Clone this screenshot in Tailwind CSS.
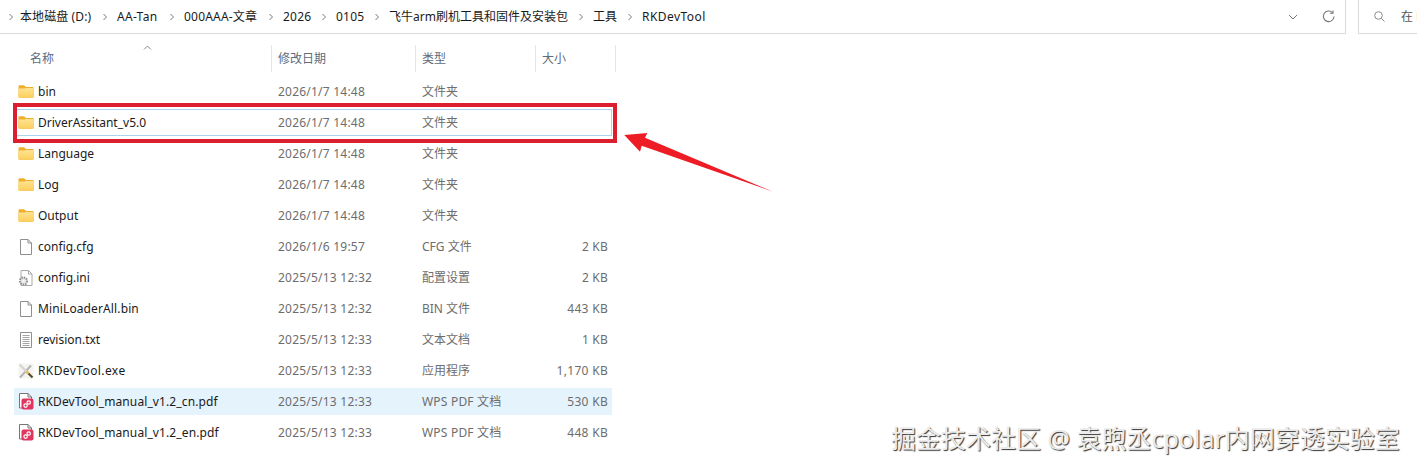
<!DOCTYPE html>
<html lang="zh-CN">
<head>
<meta charset="utf-8">
<title>RKDevTool</title>
<script src="https://cdn.jsdelivr.net/npm/@tailwindcss/browser@4"></script>
</head>
<body class="bg-white overflow-hidden">
<svg class="absolute w-0 h-0" width="0" height="0">
  <defs>
    <linearGradient id="fg" x1="0" y1="0" x2="0" y2="1"><stop offset="0" stop-color="#fee392"/><stop offset="1" stop-color="#fbcf5c"/></linearGradient>
    <symbol id="folder" viewBox="0 0 16 13">
      <path d="M0.5 1.5 Q0.5 0.3 1.7 0.3 H6 L8 2 H14.5 Q15.7 2 15.7 3.2 V11.5 Q15.7 12.7 14.5 12.7 H1.7 Q0.5 12.7 0.5 11.5 Z" fill="#eeb02a"/>
      <path d="M0.5 4.6 Q0.5 3.6 1.5 3.6 H6.5 L8 3 H14.5 Q15.7 3 15.7 4 V11.5 Q15.7 12.7 14.5 12.7 H1.7 Q0.5 12.7 0.5 11.5 Z" fill="url(#fg)"/>
    </symbol>
    <symbol id="file" viewBox="0 0 16 16">
      <path d="M2.5 0.5 H10 L13.5 4 V15.5 H2.5 Z" fill="#fff" stroke="#8f8f8f"/>
      <path d="M10 0.5 V4 H13.5" fill="none" stroke="#8f8f8f"/>
    </symbol>
    <symbol id="pdf" viewBox="0 0 16 17">
      <path d="M1.5 0.5 H10 L13.5 4 V15 H1.5 Z" fill="#fff" stroke="#777"/>
      <path d="M10 0.5 V4 H13.5" fill="none" stroke="#777"/>
      <rect x="3.5" y="5.5" width="12" height="11" rx="2" fill="#e0355f"/>
      <circle cx="10.7" cy="9.5" r="1.7" fill="none" stroke="#fff" stroke-width="1.2"/>
      <circle cx="7.6" cy="12.6" r="1.7" fill="none" stroke="#fff" stroke-width="1.2"/>
    </symbol>
  </defs>
</svg>

<div class="relative w-[1417px] h-[469px] overflow-hidden font-['Noto_Sans','Noto_Sans_CJK_SC',sans-serif] text-[12px]">

  <!-- top bar -->
  <div class="flex h-[34px]">
    <div class="w-[1346px] flex items-center border-b border-r border-[#d9d9d9] text-[#1a1a1a]">
      <div class="w-[20px] flex justify-center pl-[2px]"><svg width="6" height="8" viewBox="0 0 6 8"><path d="M1.5 1 L4.5 4 L1.5 7" fill="none" stroke="#777" stroke-width="1"/></svg></div>
      <span class="w-[72px] whitespace-nowrap tracking-[0.1px]">本地磁盘 (D:)</span>
      <div class="w-[25px] flex justify-center"><svg width="6" height="8" viewBox="0 0 6 8"><path d="M1.5 1 L4.5 4 L1.5 7" fill="none" stroke="#777" stroke-width="1"/></svg></div>
      <span class="w-[42px] whitespace-nowrap tracking-[0.3px]">AA-Tan</span>
      <div class="w-[25px] flex justify-center"><svg width="6" height="8" viewBox="0 0 6 8"><path d="M1.5 1 L4.5 4 L1.5 7" fill="none" stroke="#777" stroke-width="1"/></svg></div>
      <span class="w-[74px] whitespace-nowrap tracking-[0.2px]">000AAA-文章</span>
      <div class="w-[25px] flex justify-center"><svg width="6" height="8" viewBox="0 0 6 8"><path d="M1.5 1 L4.5 4 L1.5 7" fill="none" stroke="#777" stroke-width="1"/></svg></div>
      <span class="w-[28px] whitespace-nowrap tracking-[0.2px]">2026</span>
      <div class="w-[25px] flex justify-center"><svg width="6" height="8" viewBox="0 0 6 8"><path d="M1.5 1 L4.5 4 L1.5 7" fill="none" stroke="#777" stroke-width="1"/></svg></div>
      <span class="w-[28px] whitespace-nowrap tracking-[0.2px]">0105</span>
      <div class="w-[25px] flex justify-center"><svg width="6" height="8" viewBox="0 0 6 8"><path d="M1.5 1 L4.5 4 L1.5 7" fill="none" stroke="#777" stroke-width="1"/></svg></div>
      <span class="w-[179px] whitespace-nowrap">飞牛arm刷机工具和固件及安装包</span>
      <div class="w-[25px] flex justify-center"><svg width="6" height="8" viewBox="0 0 6 8"><path d="M1.5 1 L4.5 4 L1.5 7" fill="none" stroke="#777" stroke-width="1"/></svg></div>
      <span class="w-[24px] whitespace-nowrap">工具</span>
      <div class="w-[25px] flex justify-center"><svg width="6" height="8" viewBox="0 0 6 8"><path d="M1.5 1 L4.5 4 L1.5 7" fill="none" stroke="#777" stroke-width="1"/></svg></div>
      <span class="whitespace-nowrap tracking-[0.45px]">RKDevTool</span>
      <div class="ml-auto flex items-center gap-[24px] pr-[10px]">
        <svg width="10" height="6" viewBox="0 0 10 6"><path d="M1 1 L5 5 L9 1" fill="none" stroke="#777" stroke-width="1"/></svg>
        <svg width="13" height="13" viewBox="0 0 13 13"><path d="M10.5 2.6 A5.3 5.3 0 1 0 12 6.5" fill="none" stroke="#777" stroke-width="1.1"/><path d="M8 3.3 H11 V0.4" fill="none" stroke="#777" stroke-width="1.1"/></svg>
      </div>
    </div>
    <div class="ml-[12px] flex-1 min-w-0 flex items-center border-b border-l border-[#d9d9d9] pl-[15px] overflow-hidden">
      <svg class="shrink-0" width="11" height="11" viewBox="0 0 11 11"><circle cx="4.5" cy="4.5" r="3.8" fill="none" stroke="#8a8a8a"/><path d="M7.3 7.3 L10.5 10.5" stroke="#8a8a8a"/></svg>
      <span class="ml-[16px] whitespace-nowrap text-[#555]">在 RKDevTool 中搜索</span>
    </div>
  </div>

  <!-- header -->
  <div class="relative mt-[11px] flex h-[27px] items-center text-[#5d6b7d]">
    <div class="w-[272px] h-full pl-[30px] flex items-center border-r border-[#e5e5e5]">名称</div>
    <div class="w-[144px] h-full pl-[6px] flex items-center border-r border-[#e5e5e5]">修改日期</div>
    <div class="w-[120px] h-full pl-[6px] flex items-center border-r border-[#e5e5e5]">类型</div>
    <div class="w-[80px] h-full pl-[6px] flex items-center border-r border-[#e5e5e5]">大小</div>
    <svg class="absolute left-[143px] top-0" width="9" height="5" viewBox="0 0 9 5"><path d="M1 4.5 L4.5 1 L8 4.5" fill="none" stroke="#888" stroke-width="1"/></svg>
  </div>

  <!-- rows -->
  <div class="mt-[6px] ml-[14px] w-[598px] flex flex-col gap-[4px] text-[#6d6d6d]">
    <div class="h-[27px] grid grid-cols-[264px_144px_114px_76px] items-center">
      <div class="flex items-center text-[#1a1a1a]"><svg class="ml-[4px] mr-[4px]" width="16" height="13"><use href="#folder"/></svg><span>bin</span></div>
      <div class="tracking-[0.22px]">2026/1/7 14:48</div><div>文件夹</div><div></div>
    </div>
    <div class="h-[27px] grid grid-cols-[264px_144px_114px_76px] items-center outline outline-1 -outline-offset-1 outline-[#a9d3ee]">
      <div class="flex items-center text-[#1a1a1a]"><svg class="ml-[4px] mr-[4px]" width="16" height="13"><use href="#folder"/></svg><span>DriverAssitant_v5.0</span></div>
      <div class="tracking-[0.22px]">2026/1/7 14:48</div><div>文件夹</div><div></div>
    </div>
    <div class="h-[27px] grid grid-cols-[264px_144px_114px_76px] items-center">
      <div class="flex items-center text-[#1a1a1a]"><svg class="ml-[4px] mr-[4px]" width="16" height="13"><use href="#folder"/></svg><span>Language</span></div>
      <div class="tracking-[0.22px]">2026/1/7 14:48</div><div>文件夹</div><div></div>
    </div>
    <div class="h-[27px] grid grid-cols-[264px_144px_114px_76px] items-center">
      <div class="flex items-center text-[#1a1a1a]"><svg class="ml-[4px] mr-[4px]" width="16" height="13"><use href="#folder"/></svg><span>Log</span></div>
      <div class="tracking-[0.22px]">2026/1/7 14:48</div><div>文件夹</div><div></div>
    </div>
    <div class="h-[27px] grid grid-cols-[264px_144px_114px_76px] items-center">
      <div class="flex items-center text-[#1a1a1a]"><svg class="ml-[4px] mr-[4px]" width="16" height="13"><use href="#folder"/></svg><span>Output</span></div>
      <div class="tracking-[0.22px]">2026/1/7 14:48</div><div>文件夹</div><div></div>
    </div>
    <div class="h-[27px] grid grid-cols-[264px_144px_114px_76px] items-center">
      <div class="flex items-center text-[#1a1a1a]"><svg class="ml-[4px] mr-[4px]" width="16" height="16"><use href="#file"/></svg><span>config.cfg</span></div>
      <div class="tracking-[0.22px]">2026/1/6 19:57</div><div>CFG 文件</div><div class="text-right pr-[4px] tracking-[0.2px]">2 KB</div>
    </div>
    <div class="h-[27px] grid grid-cols-[264px_144px_114px_76px] items-center">
      <div class="flex items-center text-[#1a1a1a]">
        <svg class="ml-[4px] mr-[4px] overflow-visible" width="16" height="16" viewBox="0 0 16 16"><path d="M3 0.5 H10.5 L14 4 V15.5 H3 Z" fill="#fff" stroke="#a8a8a8"/><path d="M10.5 0.5 V4 H14" fill="none" stroke="#a8a8a8"/><circle cx="5.5" cy="11" r="3.6" fill="#e6e6e6" stroke="#8c8c8c" stroke-width="2" stroke-dasharray="1.5 0.9"/><circle cx="5.5" cy="11" r="1.2" fill="#f4f4f4"/></svg>
        <span>config.ini</span></div>
      <div class="tracking-[0.22px]">2025/5/13 12:32</div><div>配置设置</div><div class="text-right pr-[4px] tracking-[0.2px]">2 KB</div>
    </div>
    <div class="h-[27px] grid grid-cols-[264px_144px_114px_76px] items-center">
      <div class="flex items-center text-[#1a1a1a]"><svg class="ml-[4px] mr-[4px]" width="16" height="16"><use href="#file"/></svg><span class="tracking-[0.12px]">MiniLoaderAll.bin</span></div>
      <div class="tracking-[0.22px]">2025/5/13 12:32</div><div>BIN 文件</div><div class="text-right pr-[4px] tracking-[0.3px]">443 KB</div>
    </div>
    <div class="h-[27px] grid grid-cols-[264px_144px_114px_76px] items-center">
      <div class="flex items-center text-[#1a1a1a]">
        <svg class="ml-[4px] mr-[4px]" width="16" height="16" viewBox="0 0 16 16"><path d="M2.5 0.5 H13.5 V15.5 H2.5 Z" fill="#fff" stroke="#8f8f8f"/><path d="M4.5 3.5 H11.5 M4.5 5.5 H11.5 M4.5 7.5 H11.5 M4.5 9.5 H11.5 M4.5 11.5 H11.5 M4.5 13.5 H11.5" stroke="#a5a5a5"/></svg>
        <span>revision.txt</span></div>
      <div class="tracking-[0.22px]">2025/5/13 12:33</div><div>文本文档</div><div class="text-right pr-[4px] tracking-[0.2px]">1 KB</div>
    </div>
    <div class="h-[27px] grid grid-cols-[264px_144px_114px_76px] items-center">
      <div class="flex items-center text-[#1a1a1a]">
        <svg class="ml-[4px] mr-[4px]" width="16" height="16" viewBox="0 0 16 16"><rect x="0.5" y="0.5" width="15" height="15" rx="1" fill="#f4f4f0"/><path d="M2 14.5 L13 2.5" stroke="#b4b4b4" stroke-width="2"/><path d="M1.5 1.5 L8.5 8.5" stroke="#d6d6d6" stroke-width="2.4"/><path d="M8.5 8.5 L10.5 10.5" stroke="#e6c052" stroke-width="2.6"/><path d="M10.5 10.5 L14.5 14.5" stroke="#5a4a2a" stroke-width="2.2"/></svg>
        <span class="tracking-[0.4px]">RKDevTool.exe</span></div>
      <div class="tracking-[0.22px]">2025/5/13 12:33</div><div>应用程序</div><div class="text-right pr-[4px] tracking-[0.3px]">1,170 KB</div>
    </div>
    <div class="h-[27px] grid grid-cols-[264px_144px_114px_76px] items-center bg-[#e5f3fd]">
      <div class="flex items-center text-[#1a1a1a]"><svg class="ml-[4px] mr-[4px]" width="16" height="17"><use href="#pdf"/></svg><span class="tracking-[0.11px]">RKDevTool_manual_v1.2_cn.pdf</span></div>
      <div class="tracking-[0.22px]">2025/5/13 12:33</div><div class="tracking-[0.2px]">WPS PDF 文档</div><div class="text-right pr-[4px] tracking-[0.3px]">530 KB</div>
    </div>
    <div class="h-[27px] grid grid-cols-[264px_144px_114px_76px] items-center">
      <div class="flex items-center text-[#1a1a1a]"><svg class="ml-[4px] mr-[4px]" width="16" height="17"><use href="#pdf"/></svg><span class="tracking-[0.11px]">RKDevTool_manual_v1.2_en.pdf</span></div>
      <div class="tracking-[0.22px]">2025/5/13 12:33</div><div class="tracking-[0.2px]">WPS PDF 文档</div><div class="text-right pr-[4px] tracking-[0.3px]">448 KB</div>
    </div>
  </div>

  <!-- annotation -->
  <div class="absolute left-[13px] top-[103px] w-[604px] h-[40px] border-[4px] border-[#dc1f2e]"></div>
  <svg class="absolute left-0 top-0" width="1417" height="469" viewBox="0 0 1417 469">
    <path d="M624.3 135 L647.3 133 L645 137.7 L773 191.7 L641.7 145.7 L640 151.7 Z" fill="#ee1c25"/>
  </svg>

  <!-- watermark -->
  <div class="absolute left-[891px] top-[420px] whitespace-nowrap text-[25px] leading-[36px] text-[#ececec] [text-shadow:1px_1px_1px_#333]">掘金技术社区 @ 袁煦丞cpolar内网穿透实验室</div>
</div>
</body>
</html>
